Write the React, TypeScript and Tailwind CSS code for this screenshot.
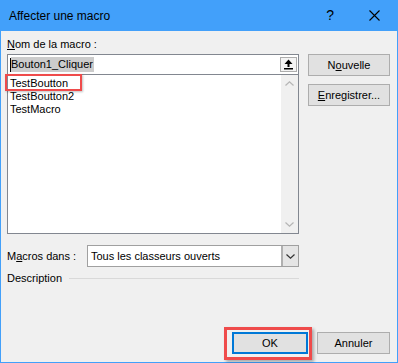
import React from 'react';

function UpArrowIcon() {
  return (
    <svg width="9" height="11" viewBox="0 0 9 11">
      <path d="M4.5 0.5 L8.5 5 L5.5 5 L5.5 8 L3.5 8 L3.5 5 L0.5 5 Z" fill="#000" />
      <rect x="0" y="9" width="9" height="1.5" fill="#000" />
    </svg>
  );
}

function Chevron({ up, color }: { up?: boolean; color: string }) {
  return (
    <svg width="9" height="5" viewBox="0 0 9 5">
      <path
        d={up ? 'M0.5 4.5 L4.5 0.8 L8.5 4.5' : 'M0.5 0.5 L4.5 4.2 L8.5 0.5'}
        fill="none"
        stroke={color}
        strokeWidth="1.2"
      />
    </svg>
  );
}

const macros = ['TestBoutton', 'TestBoutton2', 'TestMacro'];

export default function App() {
  return (
    <div className="w-[398px] h-[363px] bg-[#42a0fa] flex flex-col px-px pb-px font-['Liberation_Sans',Arial,sans-serif] text-black">
      {/* barre de titre */}
      <div className="h-[31px] shrink-0 flex items-center pl-[8px] text-[12px]">
        <span className="flex-1">Affecter une macro</span>
        <span className="text-[14px] mr-[35px]">?</span>
        <svg width="11" height="11" viewBox="0 0 11 11" className="mr-[17px]">
          <path d="M0.5 0.5 L10.5 10.5 M10.5 0.5 L0.5 10.5" stroke="#000" strokeWidth="1.1" />
        </svg>
      </div>

      <div className="flex-1 bg-[#f0f0f0] flex flex-col text-[11px]">
        <div className="flex pl-[6px] pt-[5px]">
          {/* colonne gauche */}
          <div className="w-[292px]">
            <div className="h-[16px] leading-[16px] mb-[2px]">
              <u>N</u>om de la macro :
            </div>
            <div className="h-[180px] border border-[#828790] bg-white flex flex-col">
              <div className="h-[20px] shrink-0 border-b border-[#828790] flex items-center pl-[2px]">
                <span className="w-px h-[14px] bg-black" />
                <span className="bg-[#cccccc] h-[15px] leading-[15px] pr-px">Bouton1_Cliquer</span>
                <span className="flex-1" />
                <span className="w-[17px] h-[15px] mr-px border border-[#adadad] bg-[#f4f4f4] flex items-center justify-center">
                  <UpArrowIcon />
                </span>
              </div>
              <div className="flex-1 flex relative">
                <div className="flex-1 pl-[2px] pt-[2px] leading-[13px]">
                  {macros.map((m) => (
                    <div key={m}>{m}</div>
                  ))}
                </div>
                <div className="absolute left-[-3px] top-[-1px] w-[77px] h-[17px] border-2 border-[#ef4b4b] shadow-[1px_1px_2px_rgba(0,0,0,0.25)]" />
                <div className="w-[17px] bg-[#f0f0f0] flex flex-col justify-between">
                  <div className="h-[17px] flex items-center justify-center">
                    <Chevron up color="#b5b5b5" />
                  </div>
                  <div className="h-[17px] flex items-center justify-center">
                    <Chevron color="#b5b5b5" />
                  </div>
                </div>
              </div>
            </div>

            <div className="mt-[11px] h-[22px] flex items-center">
              <span className="w-[80px]">
                M<u>a</u>cros dans :
              </span>
              <div className="flex-1 h-full border border-[#a0a0a0] bg-white flex items-center">
                <span className="flex-1 pl-[3px]">Tous les classeurs ouverts</span>
                <span className="w-[17px] h-full border-l-2 border-[#b0b0b0] bg-[#e5e5e5] flex items-center justify-center">
                  <Chevron color="#333" />
                </span>
              </div>
            </div>

            <div className="mt-[3px] h-[16px] flex items-center">
              <span>Description</span>
              <span className="flex-1 h-px bg-[#d9d9d9] ml-[7px]" />
            </div>
          </div>

          {/* colonne droite */}
          <div className="ml-[9px] mt-[18px] w-[82px] flex flex-col gap-[8px]">
            <button className="h-[22px] border border-[#adadad] bg-[#e1e1e1]">
              N<u>o</u>uvelle
            </button>
            <button className="h-[22px] border border-[#adadad] bg-[#e1e1e1]">
              <u>E</u>nregistrer...
            </button>
          </div>
        </div>

        {/* boutons du bas */}
        <div className="mt-auto flex justify-end gap-[9px] pr-[7px] pb-[8px]">
          <div className="relative">
            <button className="w-[76px] h-[22px] border-2 border-[#0078d7] bg-[#e1e1e1]">OK</button>
            <div className="absolute left-[-8px] right-[-4px] top-[-5px] bottom-[-6px] border-[3px] border-[#ef4b4b] shadow-[2px_2px_3px_rgba(0,0,0,0.3)]" />
          </div>
          <button className="w-[73px] h-[22px] border border-[#adadad] bg-[#e1e1e1]">Annuler</button>
        </div>
      </div>
    </div>
  );
}
